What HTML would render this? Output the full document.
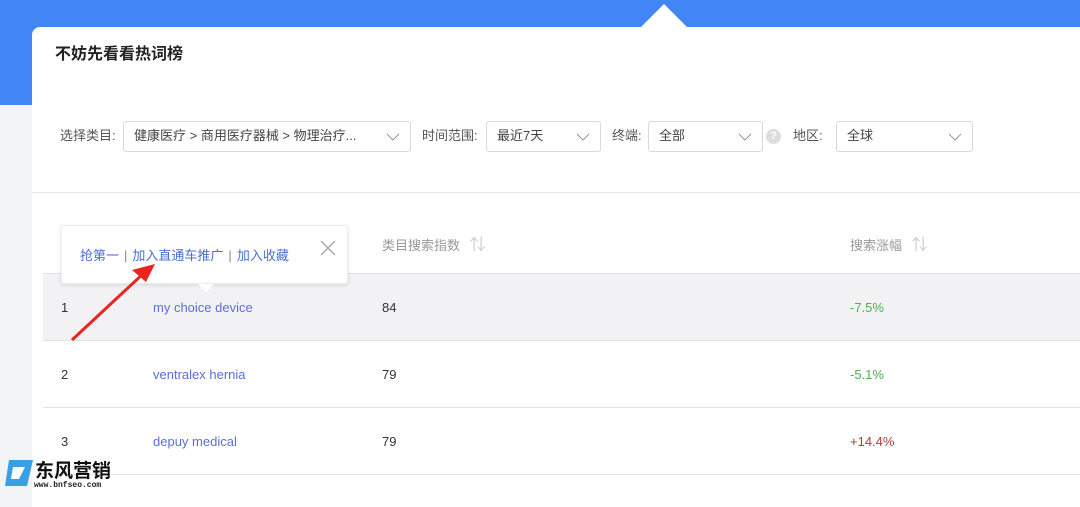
<!DOCTYPE html>
<html><head><meta charset="utf-8"><style>
*{margin:0;padding:0;box-sizing:border-box}
body{width:1080px;height:496px;overflow:hidden;background:#f3f4f6;font-family:"Liberation Sans","Noto Sans CJK SC",sans-serif;position:relative}
.blue{position:absolute;left:0;top:0;width:1080px;height:105px;background:#4285f4}
.card{position:absolute;left:32px;top:27px;width:1060px;height:480px;background:#fff;border-radius:8px 0 0 0}
.notch{position:absolute;left:641px;top:4px;width:0;height:0;border-left:23px solid transparent;border-right:23px solid transparent;border-bottom:23px solid #fff}
.t{position:absolute;white-space:nowrap}
.title{left:55px;top:44px;font-size:16px;font-weight:bold;color:#222;line-height:22px}
.lbl{font-size:13px;color:#555;top:127px;line-height:18px}
.sel{position:absolute;top:121px;height:31px;border:1px solid #d9d9d9;border-radius:3px;background:#fff;font-size:13px;color:#444;padding:0 10px;line-height:28px;white-space:nowrap;overflow:hidden}
.sel svg{position:absolute;right:10px;top:10px}
.hr{position:absolute;left:32px;top:192px;width:1048px;height:1px;background:#e6e6e6}
.row{position:absolute;left:43px;width:1037px;height:67px;border-bottom:1px solid #e3e3e3}
.cell{position:absolute;top:25px;font-size:13px;color:#333}
.kw{color:#5b6fd6}
.hd{font-size:13px;color:#999;top:231px}
.pop{position:absolute;left:61px;top:225px;width:287px;height:59px;background:#fff;border:1px solid #eee;border-radius:3px;box-shadow:0 1px 4px rgba(0,0,0,.12)}
.pop .tx{position:absolute;left:18px;top:19px;font-size:13px;color:#4a6fd0;white-space:nowrap}
.pop .sp{color:#888;margin:0 5px}
</style></head><body>
<div class="blue"></div>
<div class="notch"></div>
<div class="card"></div>
<div class="t title">不妨先看看热词榜</div>
<div class="t lbl" style="left:60px">选择类目:</div>
<div class="sel" style="left:123px;width:288px">健康医疗 &gt; 商用医疗器械 &gt; 物理治疗...<svg width="14" height="10"><path d="M1 2l6 6 6-6" stroke="#999" fill="none"/></svg></div>
<div class="t lbl" style="left:422px">时间范围:</div>
<div class="sel" style="left:486px;width:115px">最近7天<svg width="14" height="10"><path d="M1 2l6 6 6-6" stroke="#999" fill="none"/></svg></div>
<div class="t lbl" style="left:612px">终端:</div>
<div class="sel" style="left:648px;width:115px">全部<svg width="14" height="10"><path d="M1 2l6 6 6-6" stroke="#999" fill="none"/></svg></div>
<div class="t" style="left:766px;top:129px;width:15px;height:15px;border-radius:50%;background:#ddd;color:#fff;font-size:11px;text-align:center;line-height:15px;font-weight:bold">?</div>
<div class="t lbl" style="left:793px">地区:</div>
<div class="sel" style="left:836px;width:137px">全球<svg width="14" height="10"><path d="M1 2l6 6 6-6" stroke="#999" fill="none"/></svg></div>
<div class="hr"></div>
<div class="row" style="top:273px;height:68px;background:#f2f2f4;border-top:1px solid #e3e3e3"></div>
<div class="row" style="top:341px"></div>
<div class="row" style="top:408px"></div>
<div class="t hd" style="left:382px">类目搜索指数 <span style="color:#ccc;font-size:16px;margin-left:6px">⇅</span></div>
<div class="t hd" style="left:850px">搜索涨幅 <span style="color:#ccc;font-size:16px;margin-left:6px">⇅</span></div>
<div class="t cell" style="left:61px;top:300px">1</div>
<div class="t cell kw" style="left:153px;top:300px">my choice device</div>
<div class="t cell" style="left:382px;top:300px">84</div>
<div class="t cell" style="left:850px;top:300px;color:#4caf50">-7.5%</div>
<div class="t cell" style="left:61px;top:367px">2</div>
<div class="t cell kw" style="left:153px;top:367px">ventralex hernia</div>
<div class="t cell" style="left:382px;top:367px">79</div>
<div class="t cell" style="left:850px;top:367px;color:#4caf50">-5.1%</div>
<div class="t cell" style="left:61px;top:434px">3</div>
<div class="t cell kw" style="left:153px;top:434px">depuy medical</div>
<div class="t cell" style="left:382px;top:434px">79</div>
<div class="t cell" style="left:850px;top:434px;color:#b03a3a">+14.4%</div>
<div class="pop"><div class="tx">抢第一<span class="sp">|</span>加入直通车推广<span class="sp">|</span>加入收藏</div>
<svg style="position:absolute;left:258px;top:14px" width="16" height="16"><path d="M1 1l14 14M15 1L1 15" stroke="#aaa" stroke-width="1.5"/></svg></div>
<div style="position:absolute;left:198px;top:284px;width:0;height:0;border-left:8px solid transparent;border-right:8px solid transparent;border-top:8px solid #fff"></div>
<svg style="position:absolute;left:0;top:0" width="1080" height="496"><path d="M72 340L145 272" stroke="#e8251f" stroke-width="3"/><path d="M155 264L132 270L146 282Z" fill="#e8251f"/></svg>
<svg style="position:absolute;left:3px;top:458px" width="32" height="32"><path d="M6 2h24l-6 26H2z" fill="#3aa0e6"/><path d="M10 9h12l-6 12H8z" fill="#fff"/></svg>
<div class="t" style="left:35px;top:456px;font-size:19px;font-weight:bold;color:#111">东风营销</div>
<div class="t" style="left:34px;top:481px;font-size:8px;font-weight:bold;color:#222;font-family:'Liberation Mono',monospace">www.bnfseo.com</div>
</body></html>
